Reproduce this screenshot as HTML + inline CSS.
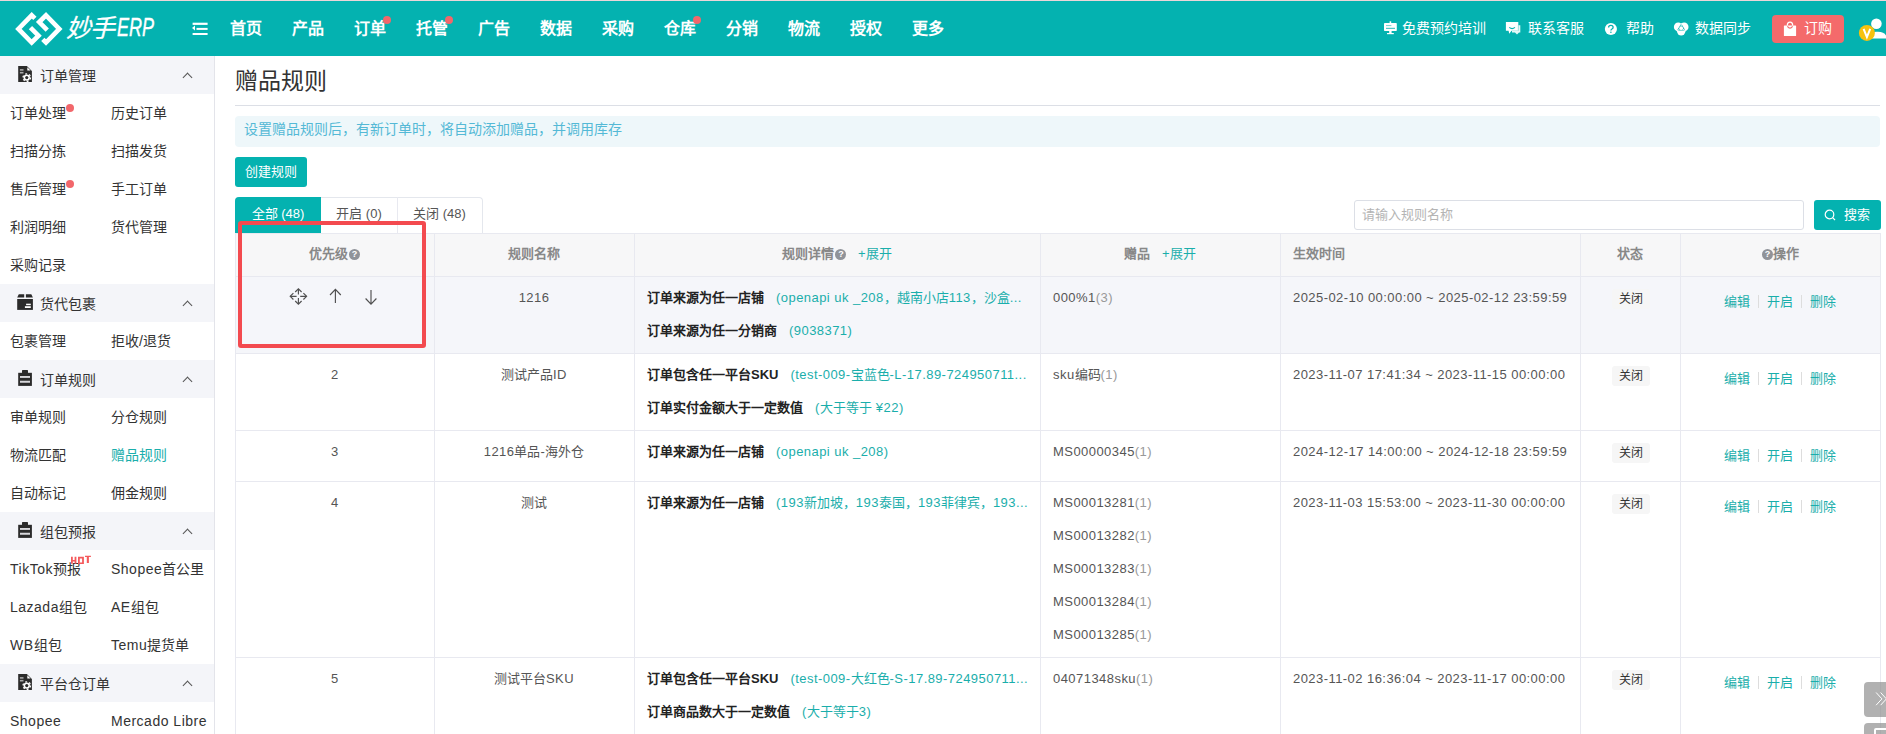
<!DOCTYPE html>
<html lang="zh-CN"><head><meta charset="utf-8">
<style>
*{box-sizing:border-box;margin:0;padding:0}
html,body{width:1886px;height:734px;overflow:hidden;background:#fff;font-family:"Liberation Sans",sans-serif;color:#333;position:relative}
i{font-style:normal}
.a{position:absolute;white-space:nowrap}
#topline{position:absolute;left:0;top:0;width:1886px;height:1px;background:#ecd6d9}
#top{position:absolute;left:0;top:0;width:1886px;height:56px;background:#04b2b0}
.nav{position:absolute;top:18.5px;font-size:16px;font-weight:bold;color:#fff;line-height:20px;white-space:nowrap}
.rt{top:20px;font-size:14px;color:#fff;line-height:16px}
.dot{position:absolute;width:8px;height:8px;border-radius:50%;background:#f2676b}
#side{position:absolute;left:0;top:56px;width:215px;height:678px;border-right:1px solid #e3e4ea;background:#fff}
.gh{position:absolute;left:0;width:214px;height:38px;background:#f4f5f9}
.gh .t{position:absolute;left:40px;top:10.5px;font-size:14px;color:#333;line-height:18px}
.gh .chev{position:absolute;left:184px;top:18px;width:7px;height:7px;border-left:1.3px solid #555;border-top:1.3px solid #555;transform:rotate(45deg)}
.si{font-size:14px;color:#333;line-height:18px}
.th{position:absolute;top:233px;height:43px;font-size:13px;font-weight:bold;color:#888;line-height:42px;text-align:center;white-space:nowrap}
.q{display:inline-block;width:11px;height:11px;border-radius:50%;background:#909399;color:#fff;font-size:9px;line-height:11px;text-align:center;vertical-align:1px;margin-left:1px}
.vl{position:absolute;width:1px;background:#e8e9f0}
.hl{position:absolute;height:1px;background:#e8e9f0}
.c{position:absolute;font-size:13px;color:#555;line-height:16px;white-space:nowrap}
.dt{letter-spacing:0.44px}
.dt .L{letter-spacing:0.44px}
.b{font-weight:bold;color:#222}
.lk{color:#1aaeab}
.tag{position:absolute;left:1612px;width:38px;height:20px;background:#f6f6f6;border-radius:3px;font-size:12px;color:#333;text-align:center;line-height:20px}
.ops{position:absolute;left:1724px;font-size:13px;color:#1aaeab;line-height:16px;white-space:nowrap}
.ops i{display:inline-block;width:1px;height:13px;background:#ddd;margin:0 8px;vertical-align:-2px}

.L{letter-spacing:0.45px}
.si .L{letter-spacing:0.5px}

</style></head><body>
<div id="top">
<svg class="a" style="left:0;top:0" width="70" height="56" viewBox="0 0 70 56" fill="none" stroke="#fff" stroke-width="4.63" stroke-linejoin="miter" stroke-miterlimit="10">
<path d="M34.9 18.45 L31.7 15.3 L18.4 28.9 L31.7 42.5 L38.5 35.7 L30.45 27.65"/>
<path d="M42.8 39.35 L46 42.5 L59.3 28.9 L46 15.3 L39.2 22.1 L47.25 30.15"/>
</svg>
<div class="a" style="left:66px;top:13px;font-size:25px;color:#fff;font-style:italic;line-height:30px;letter-spacing:-1px;-webkit-text-stroke:0.3px #fff">妙手</div><div class="a" style="left:117px;top:12px;font-size:26.5px;color:#fff;font-style:italic;line-height:30px;transform:scaleX(0.68);transform-origin:0 0;-webkit-text-stroke:0.4px #fff">ERP</div>
<svg class="a" style="left:191px;top:21px" width="17" height="14" viewBox="0 0 17 14">
<rect x="1.6" y="1.7" width="15" height="2.2" fill="#fff"/><rect x="5.5" y="6.9" width="11.1" height="2" fill="#fff"/><rect x="1.6" y="12" width="15" height="2.2" fill="#fff"/><path d="M1 7 L4 4.6 L4 9.4Z" fill="#fff"/></svg>
<div class="nav" style="left:230px">首页</div>
<div class="nav" style="left:292px">产品</div>
<div class="nav" style="left:354px">订单</div>
<div class="nav" style="left:416px">托管</div>
<div class="nav" style="left:478px">广告</div>
<div class="nav" style="left:540px">数据</div>
<div class="nav" style="left:602px">采购</div>
<div class="nav" style="left:664px">仓库</div>
<div class="nav" style="left:726px">分销</div>
<div class="nav" style="left:788px">物流</div>
<div class="nav" style="left:850px">授权</div>
<div class="nav" style="left:912px">更多</div>
<div class="dot" style="left:383px;top:16px"></div>
<div class="dot" style="left:445px;top:16px"></div>
<div class="dot" style="left:693px;top:16px"></div>
<div class="a rt" style="left:1402px">免费预约培训</div>
<div class="a rt" style="left:1528px">联系客服</div>
<div class="a rt" style="left:1626px">帮助</div>
<div class="a rt" style="left:1695px">数据同步</div>
<svg class="a" style="left:1383px;top:21px" width="15" height="14" viewBox="1383 21 15 14"><rect x="1384" y="23" width="12.8" height="8" rx="0.8" fill="#fff"/><rect x="1389.6" y="21.3" width="1.6" height="2" fill="#fff"/><rect x="1386" y="25" width="5.4" height="1.1" fill="#7fd6d4"/><rect x="1386" y="27.8" width="9" height="1.1" fill="#3cc2c0"/><rect x="1389.2" y="31" width="2.4" height="2.2" fill="#fff"/><rect x="1387" y="33" width="6.8" height="1.2" fill="#fff"/></svg>
<svg class="a" style="left:1504px;top:20px" width="18" height="16" viewBox="1504 20 18 16"><path d="M1518.3 25.2 H1520.3 V32.4 H1519 L1517 34.6 L1515 32.4 H1512 V30.7 H1518.3 Z" fill="#fff" opacity="0.9"/><path d="M1505.9 21.9 H1518.3 V30.7 H1511.5 L1509.2 33.7 L1508.6 30.7 H1505.9 Z" fill="#fff"/><path d="M1509.3 27.4 Q1512.1 29.8 1515 27.4" stroke="#04b2b0" stroke-width="1.1" fill="none"/><path d="M1518.3 25.2 V30.7" stroke="#8fd9d8" stroke-width="0.6"/></svg>
<svg class="a" style="left:1603px;top:21px" width="16" height="16" viewBox="1603 21 16 16"><circle cx="1610.9" cy="29" r="6.05" fill="#fff"/><path d="M1608.6 27.4 Q1608.6 25.3 1610.9 25.3 Q1613.1 25.3 1613.1 27.2 Q1613.1 28.4 1611.9 29 Q1610.9 29.5 1610.9 30.6" stroke="#04b2b0" stroke-width="1.3" fill="none"/><circle cx="1610.9" cy="32.2" r="0.8" fill="#04b2b0"/></svg>
<svg class="a" style="left:1672px;top:21px" width="18" height="16" viewBox="1672 21 18 16"><circle cx="1678.2" cy="26.9" r="4.3" fill="#fff"/><circle cx="1684.2" cy="26.9" r="4.3" fill="#fff"/><circle cx="1681.2" cy="31.2" r="4.2" fill="#fff"/><path d="M1681.2 23.6 L1677 30.6 H1685.4 Z" fill="#04b2b0"/><circle cx="1681.2" cy="28.2" r="1.9" fill="#fff"/><path d="M1681.2 26 V23 M1679.4 29.3 L1676.8 30.8 M1683 29.3 L1685.6 30.8" stroke="#fff" stroke-width="0.9"/></svg>
<div class="a" style="left:1772px;top:15px;width:72px;height:28px;background:#f46a6b;border-radius:4px"></div>
<svg class="a" style="left:1782px;top:20px" width="16" height="18" viewBox="1782 20 16 18"><rect x="1783.9" y="25.5" width="12.2" height="10.5" rx="0.6" fill="#fff"/><path d="M1787.3 25.5 Q1787.3 22.1 1790 22.1 Q1792.7 22.1 1792.7 25.5" stroke="#fff" stroke-width="1.3" fill="none"/><path d="M1787.4 26.4 Q1790 29.9 1792.6 26.4" stroke="#f46a6b" stroke-width="1.2" fill="none"/></svg>
<div class="a rt" style="left:1804px;color:#fff">订购</div>
<svg class="a" style="left:1856px;top:16px" width="30" height="26" viewBox="1856 16 30 26"><circle cx="1876.4" cy="23.7" r="5.3" fill="#fff"/><path d="M1869 38.6 Q1869 31.7 1876 31.7 H1878 Q1886 31.7 1887 38.6 Z" fill="#fff"/><circle cx="1866.9" cy="32.9" r="8" fill="#f6c20f"/><path d="M1863.6 28.8 L1866.9 37 L1870.2 28.8" stroke="#fff" stroke-width="2" fill="none"/></svg>
</div>
<div id="topline"></div>
<div id="side">
<div class="gh" style="top:0px"><div class="t">订单管理</div><div class="chev"></div></div>
<svg class="a" style="left:17px;top:10px" width="16" height="16" viewBox="0 0 16 16"><path d="M1.2 0 H9.9 L14.9 5 V16 H1.2 Z" fill="#2b2b2b"/><path d="M10.3 1.3 L13.6 4.6 H10.3 Z" fill="#fff"/><rect x="2.9" y="3.1" width="3.6" height="1.6" fill="#a8a8a8"/><rect x="2.9" y="5.9" width="3.6" height="1.6" fill="#a8a8a8"/><circle cx="9.75" cy="11.6" r="3.75" fill="none" stroke="#fff" stroke-width="1.3" stroke-dasharray="1.9 2.02"/><circle cx="9.75" cy="11.6" r="3.2" fill="#fff"/><circle cx="9.75" cy="11.6" r="1.6" fill="#2b2b2b"/></svg>
<div class="si a" style="left:10px;top:48px">订单处理</div>
<div class="si a" style="left:111px;top:48px;">历史订单</div>
<div class="si a" style="left:10px;top:86px">扫描分拣</div>
<div class="si a" style="left:111px;top:86px;">扫描发货</div>
<div class="si a" style="left:10px;top:124px">售后管理</div>
<div class="si a" style="left:111px;top:124px;">手工订单</div>
<div class="si a" style="left:10px;top:162px">利润明细</div>
<div class="si a" style="left:111px;top:162px;">货代管理</div>
<div class="si a" style="left:10px;top:200px">采购记录</div>
<div class="gh" style="top:228px"><div class="t">货代包裹</div><div class="chev"></div></div>
<svg class="a" style="left:17px;top:238px" width="16" height="16" viewBox="0 0 16 16"><path d="M1.8 0.2 H7.2 V3.6 H0.2 Z M8.9 0.2 H14.3 L15.9 3.6 H8.9 Z" fill="#2b2b2b"/><rect x="0.2" y="5" width="15.7" height="10.9" fill="#2b2b2b"/><rect x="9.1" y="9.7" width="4.7" height="1.5" fill="#fff"/><rect x="7.9" y="12.2" width="5.9" height="1.8" fill="#fff"/></svg>
<div class="si a" style="left:10px;top:276px">包裹管理</div>
<div class="si a" style="left:111px;top:276px;">拒收<span class="L">/</span>退货</div>
<div class="gh" style="top:304px"><div class="t">订单规则</div><div class="chev"></div></div>
<svg class="a" style="left:17px;top:314px" width="16" height="16" viewBox="0 0 16 16"><rect x="1.2" y="2.8" width="13.7" height="13.1" fill="#2b2b2b"/><rect x="5" y="0.1" width="6" height="2.9" rx="0.6" fill="#2b2b2b"/><rect x="3" y="6" width="10" height="1.9" fill="#d8d8dc"/><rect x="3" y="10.75" width="10" height="2" fill="#d8d8dc"/></svg>
<div class="si a" style="left:10px;top:352px">审单规则</div>
<div class="si a" style="left:111px;top:352px;">分仓规则</div>
<div class="si a" style="left:10px;top:390px">物流匹配</div>
<div class="si a" style="left:111px;top:390px;color:#1aaeab;">赠品规则</div>
<div class="si a" style="left:10px;top:428px">自动标记</div>
<div class="si a" style="left:111px;top:428px;">佣金规则</div>
<div class="gh" style="top:456px"><div class="t">组包预报</div><div class="chev"></div></div>
<svg class="a" style="left:17px;top:466px" width="16" height="16" viewBox="0 0 16 16"><rect x="1.2" y="2.8" width="13.7" height="13.1" fill="#2b2b2b"/><rect x="5" y="0.1" width="6" height="2.9" rx="0.6" fill="#2b2b2b"/><rect x="3" y="6" width="10" height="1.9" fill="#d8d8dc"/><rect x="3" y="10.75" width="10" height="2" fill="#d8d8dc"/></svg>
<div class="si a" style="left:10px;top:504px"><span class="L">TikTok</span>预报</div>
<div class="si a" style="left:111px;top:504px;"><span class="L">Shopee</span>首公里</div>
<div class="si a" style="left:10px;top:542px"><span class="L">Lazada</span>组包</div>
<div class="si a" style="left:111px;top:542px;"><span class="L">AE</span>组包</div>
<div class="si a" style="left:10px;top:580px"><span class="L">WB</span>组包</div>
<div class="si a" style="left:111px;top:580px;"><span class="L">Temu</span>提货单</div>
<div class="gh" style="top:608px"><div class="t">平台仓订单</div><div class="chev"></div></div>
<svg class="a" style="left:17px;top:618px" width="16" height="16" viewBox="0 0 16 16"><path d="M1.2 0 H9.9 L14.9 5 V16 H1.2 Z" fill="#2b2b2b"/><path d="M10.3 1.3 L13.6 4.6 H10.3 Z" fill="#fff"/><rect x="2.9" y="3.1" width="3.6" height="1.6" fill="#a8a8a8"/><rect x="2.9" y="5.9" width="3.6" height="1.6" fill="#a8a8a8"/><circle cx="9.75" cy="11.6" r="3.75" fill="none" stroke="#fff" stroke-width="1.3" stroke-dasharray="1.9 2.02"/><circle cx="9.75" cy="11.6" r="3.2" fill="#fff"/><circle cx="9.75" cy="11.6" r="1.6" fill="#2b2b2b"/></svg>
<div class="si a" style="left:10px;top:656px"><span class="L">Shopee</span></div>
<div class="si a" style="left:111px;top:656px;"><span class="L">Mercado Libre</span></div>
<div class="dot" style="left:66px;top:48px;width:8px;height:8px"></div>
<div class="dot" style="left:66px;top:124px;width:8px;height:8px"></div>
</div>
<svg class="a" style="left:70px;top:554px" width="22" height="11" viewBox="70 554 22 11" fill="#f45a5c"><path d="M71 556.8 H72.8 V559.9 H74.6 V556.8 H76.4 V563.7 H74.6 V561.5 H72.8 V563.7 H71 Z"/><path d="M78 556.8 H83.9 V564 H78 Z M79.8 558.4 V562.4 H82.1 V558.4 Z" fill-rule="evenodd"/><path d="M85 555.8 H90.9 V557.1 H88.9 V563 H86.8 V557.1 H85 Z"/></svg>
<div class="a" style="left:235px;top:66px;font-size:23px;color:#333;line-height:30px">赠品规则</div>
<div class="hl" style="left:235px;top:105px;width:1645px;background:#dcdfe6"></div>
<div class="a" style="left:235px;top:116px;width:1645px;height:31px;background:#eef7fa;border-radius:4px"></div>
<div class="a" style="left:244px;top:120px;font-size:14px;color:#54b9d6;line-height:18px">设置赠品规则后，有新订单时，将自动添加赠品，并调用库存</div>
<div class="a" style="left:235px;top:157px;width:72px;height:30px;background:#04b2b0;border-radius:3px;color:#fff;font-size:13px;line-height:30px;text-align:center">创建规则</div>
<div class="a" style="left:235px;top:197px;width:248px;height:36px;border:1px solid #e4e7ed;border-bottom:none;border-radius:4px 4px 0 0"></div>
<div class="a" style="left:235px;top:197px;width:86px;height:36px;background:#04b2b0;border-radius:4px 0 0 0;color:#fff;font-size:13px;line-height:34px;text-align:center">全部 (48)</div>
<div class="vl" style="left:397px;top:197px;height:36px"></div>
<div class="a" style="left:321px;top:197px;width:76px;height:36px;color:#555;font-size:13px;line-height:34px;text-align:center">开启 (0)</div>
<div class="a" style="left:397px;top:197px;width:85px;height:36px;color:#555;font-size:13px;line-height:34px;text-align:center">关闭 (48)</div>
<div class="a" style="left:1354px;top:200px;width:450px;height:30px;border:1px solid #dcdfe6;border-radius:3px"></div>
<div class="a" style="left:1362px;top:207px;font-size:13px;color:#b4b4b4;line-height:16px">请输入规则名称</div>
<div class="a" style="left:1814px;top:200px;width:67px;height:30px;background:#04b2b0;border-radius:3px"></div>
<svg class="a" style="left:1824px;top:209px" width="12" height="12" viewBox="0 0 12 12"><circle cx="5.5" cy="5.5" r="4.3" stroke="#fff" stroke-width="1.2" fill="none"/><path d="M8.6 8.6 L11 11" stroke="#fff" stroke-width="1.2"/></svg>
<div class="a" style="left:1844px;top:207px;font-size:13px;color:#fff;line-height:16px">搜索</div>
<div class="a" style="left:235px;top:233px;width:1645px;height:43px;background:#f7f7f8"></div>
<div class="a" style="left:235px;top:276px;width:1645px;height:77px;background:#f5f6fa"></div>
<div class="vl" style="left:235px;top:233px;height:501px"></div>
<div class="vl" style="left:434px;top:233px;height:501px"></div>
<div class="vl" style="left:634px;top:233px;height:501px"></div>
<div class="vl" style="left:1040px;top:233px;height:501px"></div>
<div class="vl" style="left:1280px;top:233px;height:501px"></div>
<div class="vl" style="left:1580px;top:233px;height:501px"></div>
<div class="vl" style="left:1680px;top:233px;height:501px"></div>
<div class="vl" style="left:1880px;top:233px;height:501px"></div>
<div class="hl" style="left:235px;top:233px;width:1646px"></div>
<div class="hl" style="left:235px;top:276px;width:1646px"></div>
<div class="hl" style="left:235px;top:353px;width:1646px"></div>
<div class="hl" style="left:235px;top:430px;width:1646px"></div>
<div class="hl" style="left:235px;top:481px;width:1646px"></div>
<div class="hl" style="left:235px;top:657px;width:1646px"></div>
<div class="hl" style="left:235px;top:734px;width:1646px"></div>
<div class="th" style="left:235px;width:199px">优先级<i class="q">?</i></div>
<div class="th" style="left:434px;width:200px">规则名称</div>
<div class="th" style="left:634px;width:406px">规则详情<i class="q">?</i> <span class="lk" style="margin-left:8px;font-weight:normal">+展开</span></div>
<div class="th" style="left:1040px;width:240px">赠品 <span class="lk" style="margin-left:8px;font-weight:normal">+展开</span></div>
<div class="th" style="left:1293px;text-align:left">生效时间</div>
<div class="th" style="left:1580px;width:100px">状态</div>
<div class="th" style="left:1680px;width:200px"><i class="q">?</i>操作</div>
<svg class="a" style="left:285px;top:283px" width="100" height="26" viewBox="285 283 100 26" fill="none" stroke="#505050" stroke-width="1.15" stroke-linecap="butt" stroke-linejoin="miter">
<path d="M298.4 289 V294.5 M298.4 298.1 V304 M290.5 296.3 H296.6 M300.2 296.3 H306.3"/>
<path d="M295.2 292 L298.4 288.8 L301.6 292 M295.2 301 L298.4 304.2 L301.6 301 M293.4 293.1 L290.2 296.3 L293.4 299.5 M303.4 293.1 L306.6 296.3 L303.4 299.5"/>
<path d="M335.4 289.4 V303 M330 295 L335.4 289.4 L340.8 295"/>
<path d="M371 290 V304.4 M365.6 298.5 L371 304.2 L376.4 298.5"/>
</svg>
<div class="c" style="left:235px;width:199px;text-align:center;top:367px">2</div>
<div class="c" style="left:235px;width:199px;text-align:center;top:444px">3</div>
<div class="c" style="left:235px;width:199px;text-align:center;top:495px">4</div>
<div class="c" style="left:235px;width:199px;text-align:center;top:671px">5</div>
<div class="c" style="left:434px;width:200px;text-align:center;top:290px"><span class="L">1216</span></div>
<div class="c" style="left:434px;width:200px;text-align:center;top:367px">测试产品<span class="L">ID</span></div>
<div class="c" style="left:434px;width:200px;text-align:center;top:444px"><span class="L">1216</span>单品<span class="L">-</span>海外仓</div>
<div class="c" style="left:434px;width:200px;text-align:center;top:495px">测试</div>
<div class="c" style="left:434px;width:200px;text-align:center;top:671px">测试平台<span class="L">SKU</span></div>
<div class="c" style="left:647px;top:290px"><span class="b">订单来源为任一店铺</span><span class="lk" style="margin-left:12px"><span class="L">(openapi uk _208</span>，越南小店<span class="L">113</span>，沙盒<span class="L">...</span></span></div>
<div class="c" style="left:647px;top:323px"><span class="b">订单来源为任一分销商</span><span class="lk" style="margin-left:12px"><span class="L">(9038371)</span></span></div>
<div class="c" style="left:647px;top:367px"><span class="b">订单包含任一平台SKU</span><span class="lk" style="margin-left:12px"><span class="L">(test-009-</span>宝蓝色<span class="L">-L-17.89-724950711...</span></span></div>
<div class="c" style="left:647px;top:400px"><span class="b">订单实付金额大于一定数值</span><span class="lk" style="margin-left:12px"><span class="L">(</span>大于等于<span class="L"> ¥22)</span></span></div>
<div class="c" style="left:647px;top:444px"><span class="b">订单来源为任一店铺</span><span class="lk" style="margin-left:12px"><span class="L">(openapi uk _208)</span></span></div>
<div class="c" style="left:647px;top:495px"><span class="b">订单来源为任一店铺</span><span class="lk" style="margin-left:12px"><span class="L">(193</span>新加坡，<span class="L">193</span>泰国，<span class="L">193</span>菲律宾，<span class="L">193...</span></span></div>
<div class="c" style="left:647px;top:671px"><span class="b">订单包含任一平台SKU</span><span class="lk" style="margin-left:12px"><span class="L">(test-009-</span>大红色<span class="L">-S-17.89-724950711...</span></span></div>
<div class="c" style="left:647px;top:704px"><span class="b">订单商品数大于一定数值</span><span class="lk" style="margin-left:12px"><span class="L">(</span>大于等于<span class="L">3)</span></span></div>
<div class="c" style="left:1053px;top:290px"><span class="L">000%1</span><span class="L" style="color:#999">(3)</span></div>
<div class="c" style="left:1053px;top:367px"><span class="L">sku</span>编码<span class="L" style="color:#999">(1)</span></div>
<div class="c" style="left:1053px;top:444px"><span class="L">MS00000345</span><span class="L" style="color:#999">(1)</span></div>
<div class="c" style="left:1053px;top:495px"><span class="L">MS00013281</span><span class="L" style="color:#999">(1)</span></div>
<div class="c" style="left:1053px;top:528px"><span class="L">MS00013282</span><span class="L" style="color:#999">(1)</span></div>
<div class="c" style="left:1053px;top:561px"><span class="L">MS00013283</span><span class="L" style="color:#999">(1)</span></div>
<div class="c" style="left:1053px;top:594px"><span class="L">MS00013284</span><span class="L" style="color:#999">(1)</span></div>
<div class="c" style="left:1053px;top:627px"><span class="L">MS00013285</span><span class="L" style="color:#999">(1)</span></div>
<div class="c" style="left:1053px;top:671px"><span class="L">04071348sku</span><span class="L" style="color:#999">(1)</span></div>
<div class="c dt" style="left:1293px;top:290px">2025-02-10 00:00:00 ~ 2025-02-12 23:59:59</div>
<div class="c dt" style="left:1293px;top:367px">2023-11-07 17:41:34 ~ 2023-11-15 00:00:00</div>
<div class="c dt" style="left:1293px;top:444px">2024-12-17 14:00:00 ~ 2024-12-18 23:59:59</div>
<div class="c dt" style="left:1293px;top:495px">2023-11-03 15:53:00 ~ 2023-11-30 00:00:00</div>
<div class="c dt" style="left:1293px;top:671px">2023-11-02 16:36:04 ~ 2023-11-17 00:00:00</div>
<div class="tag" style="top:289px">关闭</div>
<div class="ops" style="top:294px">编辑<i></i>开启<i></i>删除</div>
<div class="tag" style="top:366px">关闭</div>
<div class="ops" style="top:371px">编辑<i></i>开启<i></i>删除</div>
<div class="tag" style="top:443px">关闭</div>
<div class="ops" style="top:448px">编辑<i></i>开启<i></i>删除</div>
<div class="tag" style="top:494px">关闭</div>
<div class="ops" style="top:499px">编辑<i></i>开启<i></i>删除</div>
<div class="tag" style="top:670px">关闭</div>
<div class="ops" style="top:675px">编辑<i></i>开启<i></i>删除</div>
<div class="a" style="left:238px;top:221px;width:188px;height:127px;border:4px solid #f34a4f;border-radius:3px"></div>
<div class="a" style="left:1864px;top:682px;width:30px;height:35px;background:rgba(140,140,140,0.68);border-radius:4px"></div>
<svg class="a" style="left:1870px;top:688px" width="16" height="22" viewBox="1870 688 16 22" fill="none" stroke="#fff" stroke-width="1"><path d="M1876.1 692.5 L1881.9 698.9 L1876.1 705.2 M1880.6 692.5 L1886.4 698.9 L1880.6 705.2"/></svg>
<div class="a" style="left:1864px;top:723px;width:30px;height:20px;background:rgba(140,140,140,0.68);border-radius:4px"></div>
<div class="a" style="left:1874px;top:728px;width:14px;height:10px;border:2px solid #fff;border-radius:2px"></div>
</body></html>
